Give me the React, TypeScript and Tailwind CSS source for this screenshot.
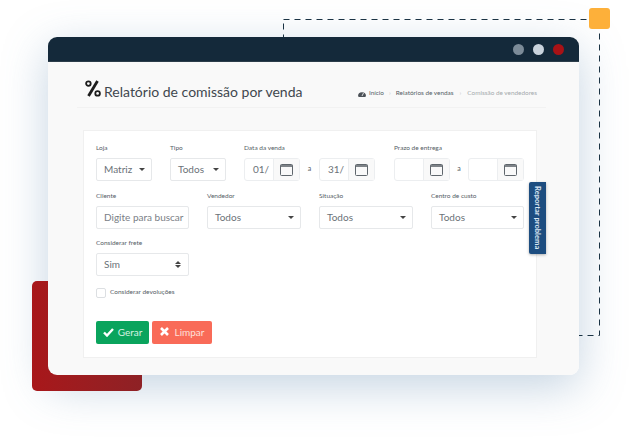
import React from "react";

function Label({ children }: { children: React.ReactNode }) {
  return <div className="h-[10px] text-[6.5px] leading-[10px] text-[#555e66] whitespace-nowrap">{children}</div>;
}

function Caret() {
  return <span className="w-0 h-0 border-x-[3px] border-x-transparent border-t-[3px] border-t-[#444]" />;
}

function SelectBox({ value, className }: { value: string; className: string }) {
  return (
    <div className={`h-[23px] mt-[5px] bg-white border border-[#e6e8ea] rounded-[2px] flex items-center justify-between text-[10px] text-[#6b7278] pl-[7px] pr-[6px] ${className}`}>
      <span>{value}</span>
      <Caret />
    </div>
  );
}

function Calendar() {
  return (
    <svg width="13" height="13" viewBox="0 0 13 13" fill="none" stroke="#5f666c" strokeWidth="1">
      <rect x="0.5" y="1.5" width="12" height="11" rx="1" />
      <path d="M0.5 3h12" strokeWidth="1.6" />
    </svg>
  );
}

function DateInput({ value, className }: { value?: string; className: string }) {
  return (
    <div className={`h-[23px] bg-white border border-[#eceef0] rounded-[3px] flex text-[10px] text-[#6b7278] ${className}`}>
      <div className="w-[28px] flex items-center pl-[8px]">{value}</div>
      <div className="flex-1 bg-[#f9f9f9] border-l border-[#eceef0] flex items-center justify-center">
        <Calendar />
      </div>
    </div>
  );
}

function Sep() {
  return <span className="w-[19px] flex items-center justify-center text-[7px] text-[#555e66] -mt-[3px]">a</span>;
}

export default function App() {
  return (
    <div className="relative w-[631px] h-[438px] overflow-hidden bg-white pt-[37px] pl-[48px] font-['Lato','Noto_Sans',sans-serif]">
      <div className="absolute left-[48px] top-[37px] w-[531px] h-[338px] rounded-[9px] shadow-[0_12px_45px_rgba(95,135,175,0.36)]" />
      <svg className="absolute left-[280px] top-[16px]" width="324" height="323" fill="none">
        <rect x="3.5" y="3.5" width="316" height="316" stroke="#1b3344" strokeWidth="1" strokeDasharray="6 5" />
      </svg>
      <div className="absolute left-[589px] top-[8px] w-[21px] h-[21px] rounded-[3px] bg-[#fdb03a]" />
      <div className="absolute left-[32px] top-[281px] w-[110px] h-[110px] rounded-[5px] bg-gradient-to-r from-[#a8171a] to-[#8e2125]" />

      <div className="relative w-[531px] h-[338px] rounded-[9px] overflow-visible bg-[#f9f9f9]">
        <div className="h-[25px] rounded-t-[9px] bg-[#14293a] border-b border-[#2c3d4a] flex items-center justify-end gap-[9px] pr-[15px]">
          <span className="w-[11px] h-[11px] rounded-full bg-[#7c8b98]" />
          <span className="w-[11px] h-[11px] rounded-full bg-[#c9d3dd]" />
          <span className="w-[11px] h-[11px] rounded-full bg-[#a81216]" />
        </div>

        <div className="ml-[29px] w-[469px] h-[46px] border-b border-[#f2f2f2] flex items-end justify-between pb-[2px] pl-[8px] pr-[9px]">
          <div className="flex items-center">
            <svg width="16" height="17" viewBox="0 0 16 17" className="mr-[3px] -mt-[6px]" fill="none" stroke="#1c1c1c">
              <path d="M12.5 1L3.5 16" strokeWidth="2.8" />
              <circle cx="3.4" cy="3.6" r="2.3" strokeWidth="1.8" />
              <circle cx="12.6" cy="13.4" r="2.3" strokeWidth="1.8" />
            </svg>
            <span className="text-[14px] leading-[26px] text-[#3f474e] mt-[2px]">Relatório de comissão por venda</span>
          </div>
          <div className="flex items-center h-[24px] text-[6.4px] text-[#555e66] whitespace-nowrap">
            <svg width="8" height="7" viewBox="0 0 8 7" className="mr-[3px]">
              <path d="M0 6.2A4 4 0 0 1 8 6.2L7 7H1Z" fill="#4c5157" />
              <path d="M4 6L5.5 3" stroke="#fff" strokeWidth="0.8" />
            </svg>
            <span>Início</span>
            <span className="mx-[5px] text-[#c8c8c8]">›</span>
            <span>Relatórios de vendas</span>
            <span className="mx-[6px] text-[#c8c8c8]">›</span>
            <span className="text-[#a4a9ad]">Comissão de vendedores</span>
          </div>
        </div>

        <div className="ml-[35px] mt-[22px] w-[454px] h-[228px] bg-white border border-[#f0f0f0] pt-[12px] pl-[12px]">
          <div className="flex">
            <div className="w-[74px]"><Label>Loja</Label><SelectBox value="Matriz" className="w-[56px]" /></div>
            <div className="w-[74px]"><Label>Tipo</Label><SelectBox value="Todos" className="w-[56px]" /></div>
            <div className="w-[150px]">
              <Label>Data da venda</Label>
              <div className="flex mt-[5px]">
                <DateInput value="01/" className="w-[56px]" /><Sep /><DateInput value="31/" className="w-[56px]" />
              </div>
            </div>
            <div className="w-[130px]">
              <Label>Prazo de entrega</Label>
              <div className="flex mt-[5px]">
                <DateInput className="w-[56px]" /><Sep /><DateInput className="w-[56px]" />
              </div>
            </div>
          </div>

          <div className="flex gap-[18px] mt-[10px]">
            <div className="w-[93px]">
              <Label>Cliente</Label>
              <div className="h-[23px] mt-[5px] border border-[#e6e8ea] rounded-[2px] flex items-center pl-[7px] text-[10px] text-[#7a8086] whitespace-nowrap">Digite para buscar</div>
            </div>
            <div className="w-[94px]"><Label>Vendedor</Label><SelectBox value="Todos" className="w-full" /></div>
            <div className="w-[94px]"><Label>Situação</Label><SelectBox value="Todos" className="w-full" /></div>
            <div className="w-[93px]"><Label>Centro de custo</Label><SelectBox value="Todos" className="w-full" /></div>
          </div>

          <div className="w-[93px] mt-[9px]">
            <Label>Considerar frete</Label>
            <div className="h-[23px] mt-[5px] border border-[#e6e8ea] rounded-[2px] flex items-center justify-between pl-[7px] pr-[7px] text-[10px] text-[#6b7278]">
              <span>Sim</span>
              <span className="flex flex-col gap-[1px]">
                <span className="w-0 h-0 border-x-[3px] border-x-transparent border-b-[3px] border-b-[#444]" />
                <span className="w-0 h-0 border-x-[3px] border-x-transparent border-t-[3px] border-t-[#444]" />
              </span>
            </div>
          </div>

          <div className="flex mt-[12px] h-[11px]">
            <span className="w-[10px] h-[10px] border border-[#dcdfe2] rounded-[2px] bg-white" />
            <span className="ml-[4px] -mt-[1px] text-[6.5px] leading-[10px] text-[#555e66]">Considerar devoluções</span>
          </div>

          <div className="flex gap-[3px] mt-[22px]">
            <div className="w-[53px] h-[23px] rounded-[2px] bg-[#0aa45d] flex items-center justify-center gap-[4px] text-[10px] text-[#d6f2e3]">
              <svg width="11" height="9" viewBox="0 0 11 9" fill="none" stroke="#fff" strokeWidth="2.4"><path d="M1 4.5L4 7.5L10 1" /></svg>
              <span>Gerar</span>
            </div>
            <div className="w-[60px] h-[23px] rounded-[2px] bg-[#f96b58] flex items-center justify-center gap-[6px] text-[10px] text-[#fde0da]">
              <svg width="9" height="9" viewBox="0 0 9 9" fill="none" stroke="#fff" strokeWidth="2.6" className="-mt-[2px]"><path d="M1 1L8 8M8 1L1 8" /></svg>
              <span>Limpar</span>
            </div>
          </div>
        </div>

        <div className="absolute left-[481px] top-[145px] w-[17px] h-[72px] rounded-l-[2px] bg-[#1d4d80] shadow-[0_1px_3px_rgba(0,0,0,0.3)] flex items-center justify-center">
          <span className="[writing-mode:vertical-rl] text-[7.6px] leading-[17px] font-bold text-[#dbe7f3] whitespace-nowrap">Reportar problema</span>
        </div>
      </div>
    </div>
  );
}
